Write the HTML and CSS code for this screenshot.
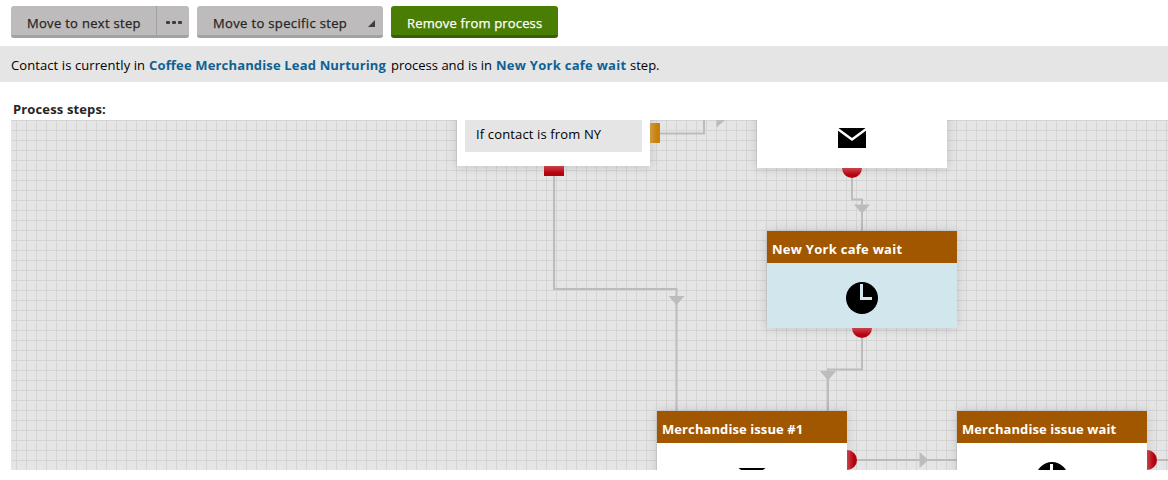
FILE: index.html
```html
<!DOCTYPE html>
<html lang="en">
<head>
<meta charset="utf-8">
<title>Process</title>
<link rel="stylesheet" href="styles.css">
</head>
<body>
<div class="toolbar">
  <div class="btn split"><span class="main"><span class="label next">Move to next step</span></span><span class="more"><i></i><i></i><i></i></span></div>
  <div class="btn specific"><span class="label spec">Move to specific step</span><svg class="corner" width="7" height="7"><path d="M7 0V7H0Z"/></svg></div>
  <div class="btn primary"><span class="label rem">Remove from process</span></div>
</div>
<div class="status"><span class="s1">Contact is currently in</span><a class="s2">Coffee Merchandise Lead Nurturing</a><span class="s3">process and is in</span><a class="s4">New York cafe wait</a><span class="s5">step.</span></div>
<h4 class="heading">Process steps:</h4>
<div class="canvas">
  <svg class="wires" width="1157" height="350" viewBox="11 120 1157 350">
    <g class="lines">
      <path d="M554 176V289H676.5V411"/>
      <path d="M660 133.500H704V120"/>
      <path d="M852 178V199.500H862V231"/>
      <path d="M862 338V369.500H828V411"/>
      <path d="M857 460H957M1157 460H1168"/>
    </g>
    <g class="arrows">
      <path d="M668.500 296H684.500L676.500 305Z"/>
      <path d="M716.500 117V127.500L725 120V117Z"/>
      <path d="M854 204.500H870L862 213.500Z"/>
      <path d="M820 371H836L828 380.500Z"/>
      <path d="M919.500 452V468L928.500 460Z"/>
    </g>
  </svg>
  <div class="node condition"><div class="rule"><span class="label cond">If contact is from NY</span></div></div>
  <div class="node mail-top"><svg class="mail" width="28" height="20"><path d="M0 0H28V20H0Z"/><path class="flap" d="M-1 0.500L14 11.500L29 0.500"/></svg></div>
  <div class="node wait">
    <div class="title"><span class="label t1">New York cafe wait</span></div>
    <div class="body"><svg class="clock" width="32" height="32"><circle cx="16" cy="16" r="16"/><path class="hands" d="M15.500 2V16.500H26"/></svg></div>
  </div>
  <div class="node issue">
    <div class="title"><span class="label t2">Merchandise issue #1</span></div>
    <div class="body"><svg class="mail" width="28" height="20"><path d="M0 0H28V20H0Z"/><path class="flap" d="M-1 0.500L14 11.500L29 0.500"/></svg></div>
  </div>
  <div class="node issue-wait">
    <div class="title"><span class="label t3">Merchandise issue wait</span></div>
    <div class="body"><svg class="clock" width="32" height="32"><circle cx="16" cy="16" r="16"/><path class="hands" d="M15.500 2V16.500H26"/></svg></div>
  </div>
  <i class="port gold"></i>
  <i class="port square"></i>
  <i class="port down p1"></i>
  <i class="port down p2"></i>
  <i class="port right p3"></i>
  <i class="port right p4"></i>
</div>
</body>
</html>
```
FILE: styles.css
```css
* { box-sizing: border-box; }
body { margin: 0; width: 1168px; height: 480px; overflow: hidden; background: #fff; color: #000; font: 13px/18px "Open Sans", "Noto Sans", sans-serif; }
.label { white-space: nowrap; }
.toolbar { display: flex; gap: 8px; height: 46px; padding: 6px 0 0 11px; }
.btn { display: flex; height: 32px; border-radius: 3px; background: #bdbbbb; color: #262524; border-bottom: 3px solid #a3a2a2; -webkit-text-stroke: .25px currentColor; line-height: 34px; overflow: hidden; }
.next { letter-spacing: .3px; }
.spec { letter-spacing: .35px; }
.rem { letter-spacing: .16px; }
.split { width: 178px; }
.main { width: 145px; padding-left: 16px; }
.more { display: flex; flex: 1; gap: 2px; padding: 15px 0 0 9px; border-left: 1px solid #a3a2a2; }
.more i { width: 4px; height: 3px; border-radius: 1px; background: #403e3d; }
.specific { width: 186px; padding: 0 8px 0 16px; justify-content: space-between; }
.corner { margin-top: 14px; fill: #403e3d; }
.primary { width: 167px; padding-left: 16px; background: #497d04; border-color: #376003; color: #fff; }
.status { display: flex; height: 36px; padding: 2px 0 0 11px; align-items: center; background: #e5e5e5; line-height: 36px; white-space: nowrap; }
.status a { color: #0f6194; font-weight: 700; }
.s1 { width: 138px; letter-spacing: .09px; }
.s2 { width: 242px; letter-spacing: .16px; }
.s3 { width: 105px; }
.s4 { width: 134px; letter-spacing: .27px; }
.heading { height: 38px; margin: 0; padding: 17px 0 0 13px; font-size: 13px; line-height: 20px; color: #262524; letter-spacing: .14px; }
.canvas { position: relative; width: 1157px; height: 350px; margin-left: 11px; overflow: hidden; background-color: #e5e5e5; background-image: linear-gradient(90deg, #d4d4d4 1px, transparent 1px), linear-gradient(#d4d4d4 1px, transparent 1px); background-size: 10px 10px; background-position: 5px 0; }
.wires { position: absolute; left: 0; top: 0; }
.lines { fill: none; stroke: #bdbbbb; stroke-width: 2; }
.arrows { fill: #bdbbbb; }
.node { position: absolute; width: 190px; background: #fff; box-shadow: 0 0 10px rgba(0, 0, 0, .16); }
.condition { left: 446px; top: -40px; width: 193px; height: 86px; padding: 40px 8px 0; }
.rule { height: 32px; padding-left: 11px; background: #e5e5e5; line-height: 29px; }
.cond { letter-spacing: .14px; }
.mail-top { left: 746px; top: -60px; height: 108px; padding: 68px 0 0 81px; }
.wait { left: 756px; top: 111px; height: 97px; }
.issue { left: 646px; top: 291px; height: 97px; }
.issue-wait { left: 946px; top: 291px; height: 97px; }
.title { height: 32px; padding-left: 5px; background: #a15600; color: #fff; font-weight: 700; line-height: 36px; }
.t1 { letter-spacing: .27px; }
.t2, .t3 { letter-spacing: .09px; }
.body { display: flex; justify-content: center; padding-top: 19px; height: 65px; }
.wait .body { background: #d1e7ed; }
.issue .body { padding-top: 25px; }
.mail, .clock { display: block; flex: none; }
.flap { fill: none; stroke: #fff; stroke-width: 2.500; }
.hands { fill: none; stroke: #d1e7ed; stroke-width: 3; }
.issue-wait .hands { stroke: #fff; }
.port { position: absolute; background: linear-gradient(#c9434c, #b5000e 70%); }
.gold { left: 639px; top: 3px; width: 10px; height: 20px; background: linear-gradient(90deg, #d09a40, #c7800b 70%); }
.square { left: 533px; top: 46px; width: 20px; height: 10px; }
.down { width: 20px; height: 10px; border-radius: 0 0 10px 10px; }
.p1 { left: 831px; top: 48px; }
.p2 { left: 841px; top: 208px; }
.right { width: 10px; height: 20px; border-radius: 0 10px 10px 0; background: linear-gradient(90deg, #c9434c, #b5000e 70%); }
.p3 { left: 836px; top: 330px; }
.p4 { left: 1136px; top: 330px; }
```
